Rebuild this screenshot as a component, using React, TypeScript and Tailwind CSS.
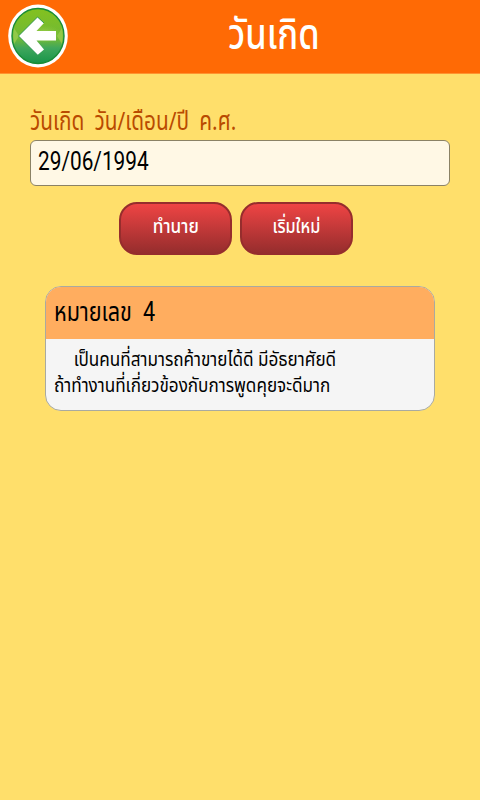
const actions = [
  { label: "ทำนาย", className: "scale-x-[0.86]" },
  { label: "เริ่มใหม่", className: "scale-x-[0.81]" },
];

function BackIcon() {
  return (
    <svg viewBox="0 0 60 64" className="h-16 w-[60px]" aria-hidden="true">
      <defs>
        <linearGradient id="disc" x1="0" y1="0" x2="0" y2="1">
          <stop offset="0" stopColor="#83c11f" />
          <stop offset="0.55" stopColor="#70b936" />
          <stop offset="0.72" stopColor="#3fa75c" />
          <stop offset="1" stopColor="#189449" />
        </linearGradient>
        <radialGradient id="glow">
          <stop offset="0" stopColor="#b4dc62" stopOpacity="0.75" />
          <stop offset="1" stopColor="#8fc83c" stopOpacity="0" />
        </radialGradient>
      </defs>
      <ellipse cx="30" cy="32" rx="29.8" ry="31.4" fill="#fff" />
      <ellipse cx="30" cy="32" rx="26" ry="27.5" fill="url(#disc)" stroke="#188c35" strokeWidth="1.4" />
      <ellipse cx="36" cy="30" rx="18" ry="9" fill="url(#glow)" />
      <path d="M6 24l5 8-5 8q-1.6-8 0-16zM54 24l-5 8 5 8q1.6-8 0-16z" fill="#91c949" />
      <path d="M10.5 32L29.5 13L36 19L28.5 27H48V36.5H28.5L36 45.5L29.5 51Z" fill="#fff" />
      <path d="M36 19L29.5 13L10.5 32L29.5 51" fill="none" stroke="#148843" strokeWidth="0.8" />
    </svg>
  );
}

export default function App() {
  return (
    <div className="min-h-screen overflow-hidden bg-[#ffdf6b] font-['Noto_Sans_Thai','Roboto','Noto_Sans',sans-serif] text-black">
      <header className="grid h-[74px] grid-cols-[68px_1fr] border-b border-[#ff9430] bg-[#ff6a05]">
        <button type="button" aria-label="กลับ" className="ml-2 mt-1 h-16 w-[60px]">
          <BackIcon />
        </button>
        <h1 className="mt-[3px] text-center text-[42px] font-medium leading-[66px] text-white">
          <span className="inline-block scale-x-[0.82] whitespace-nowrap">วันเกิด</span>
        </h1>
      </header>

      <main className="px-[30px] pt-[27px]">
        <p className="h-[39px] whitespace-nowrap text-[26px] leading-[43px] text-[#b94a00]">
          <span className="inline-block origin-left scale-x-[0.8] [word-spacing:6px]">วันเกิด วัน/เดือน/ปี ค.ศ.</span>
        </p>
        <div className="h-[46px] rounded-[6px] border border-[#8b8265] bg-[#fff8e5] pl-[7px] font-['Roboto',sans-serif] text-[26px] leading-[41px]">
          <span className="inline-block origin-left scale-x-[0.8]">29/06/1994</span>
        </div>

        <div className="mt-4 flex justify-center gap-2 pr-2">
          {actions.map((action) => (
            <button
              key={action.label}
              type="button"
              className="h-[53px] w-[113px] rounded-[18px] border-2 border-[#962d2d] bg-linear-to-b from-[#ef4444] to-[#962d2d] pb-1 text-[20px] font-medium leading-[42px] text-white"
            >
              <span className={`inline-block whitespace-nowrap ${action.className}`}>{action.label}</span>
            </button>
          ))}
        </div>

        <section className="mx-[15px] mt-[31px] h-[125px] overflow-hidden rounded-2xl border border-[#a9aaa0] bg-[#f5f5f5]">
          <h2 className="h-[52px] bg-[#ffad5f] pl-2 text-[27px] leading-[51px]">
            <span className="inline-block origin-left scale-x-[0.8] whitespace-nowrap">
              หมายเลข&nbsp; <span className="font-['Roboto',sans-serif]">4</span>
            </span>
          </h2>
          <p className="ml-2 mt-2 w-max origin-left scale-x-[0.855] indent-[23px] text-[20px] leading-[26px] whitespace-nowrap">
            เป็นคนที่สามารถค้าขายได้ดี มีอัธยาศัยดี
            <br />
            ถ้าทำงานที่เกี่ยวข้องกับการพูดคุยจะดีมาก
          </p>
        </section>
      </main>
    </div>
  );
}
